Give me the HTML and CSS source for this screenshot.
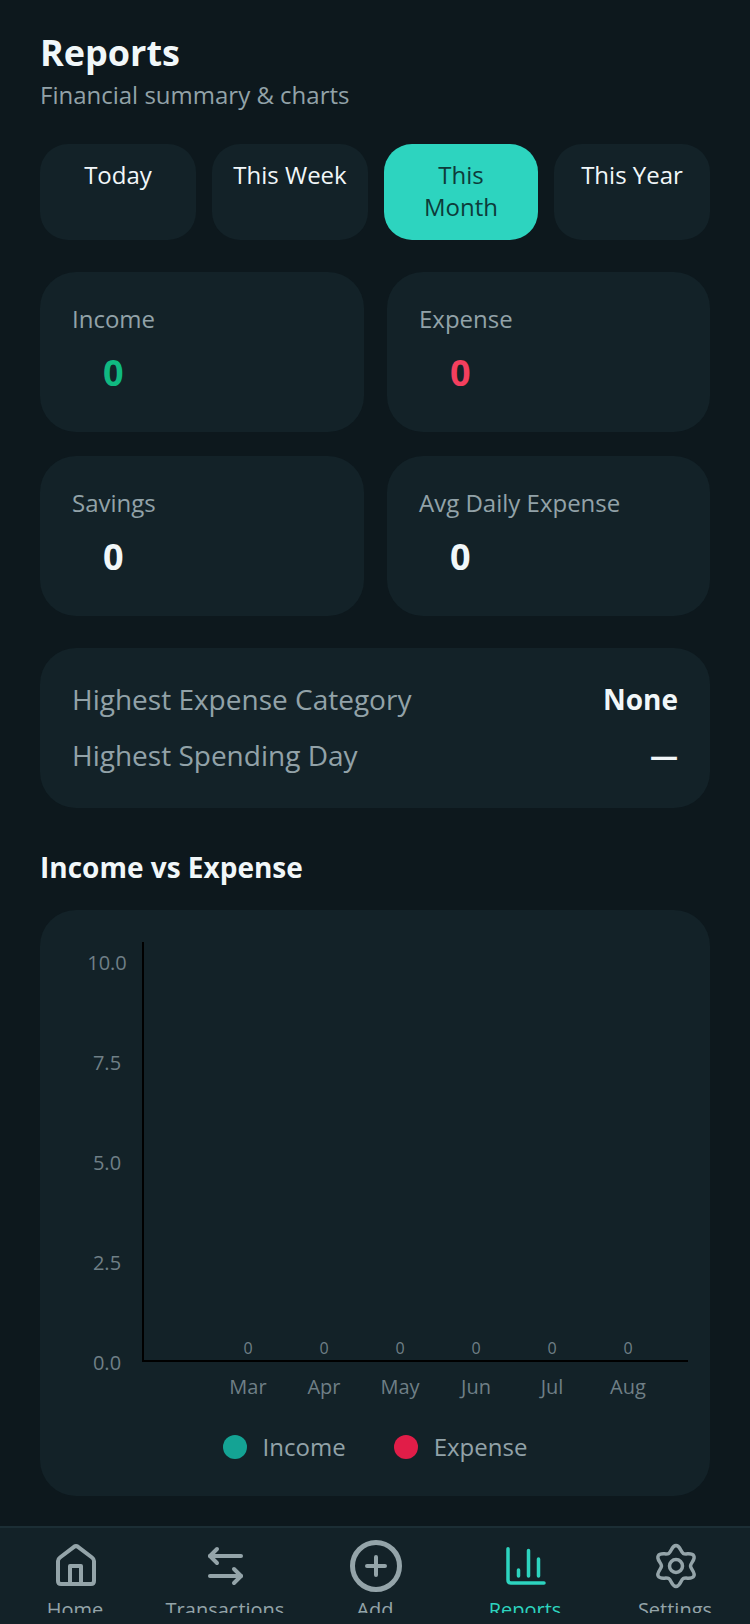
FILE: index.html
```html
<!DOCTYPE html>
<html lang="en">
<head>
    <meta charset="UTF-8">
    <meta name="viewport" content="width=device-width, initial-scale=1.0">
    <title>Reports</title>
    <link rel="stylesheet" href="styles.css">
</head>
<body>
    <div class="screen">
        <main class="content">
            <h1 class="title">Reports</h1>
            <p class="subtitle">Financial summary &amp; charts</p>

            <div class="periods">
                <div class="period">Today</div>
                <div class="period">This Week</div>
                <div class="period active">This Month</div>
                <div class="period">This Year</div>
            </div>

            <div class="stats">
                <div class="stat">
                    <div class="stat-label">Income</div>
                    <div class="stat-value income">0</div>
                </div>
                <div class="stat">
                    <div class="stat-label">Expense</div>
                    <div class="stat-value expense">0</div>
                </div>
                <div class="stat">
                    <div class="stat-label">Savings</div>
                    <div class="stat-value">0</div>
                </div>
                <div class="stat">
                    <div class="stat-label">Avg Daily Expense</div>
                    <div class="stat-value">0</div>
                </div>
            </div>

            <div class="highlights">
                <div class="highlight">
                    <span class="highlight-label">Highest Expense Category</span>
                    <span class="highlight-value">None</span>
                </div>
                <div class="highlight">
                    <span class="highlight-label">Highest Spending Day</span>
                    <span class="highlight-value">—</span>
                </div>
            </div>

            <h2 class="section-title">Income vs Expense</h2>

            <div class="chart-card">
                <!-- chart area: 0,0 is the top left of the card -->
                <svg class="chart" width="670" height="470" viewBox="0 0 670 470">
                    <g class="tick">
                        <text x="67" y="60">10.0</text>
                        <text x="67" y="160">7.5</text>
                        <text x="67" y="260">5.0</text>
                        <text x="67" y="360">2.5</text>
                        <text x="67" y="460">0.0</text>
                    </g>
                    <path class="axis" d="M103 32V451H648"/>
                    <g class="bar-value">
                        <text x="208" y="444">0</text>
                        <text x="284" y="444">0</text>
                        <text x="360" y="444">0</text>
                        <text x="436" y="444">0</text>
                        <text x="512" y="444">0</text>
                        <text x="588" y="444">0</text>
                    </g>
                </svg>
                <div class="months">
                    <span>Mar</span><span>Apr</span><span>May</span><span>Jun</span><span>Jul</span><span>Aug</span>
                </div>
                <div class="legend">
                    <div class="legend-item"><span class="dot dot-income"></span>Income</div>
                    <div class="legend-item"><span class="dot dot-expense"></span>Expense</div>
                </div>
            </div>
        </main>

        <nav class="tabbar">
            <div class="tab">
                <svg class="tab-icon" width="48" height="48" viewBox="0 0 48 48" fill="none" stroke="currentColor" stroke-width="4" stroke-linejoin="round" stroke-linecap="round">
                    <path d="M7 19q0-2 2-3.500L23 4.800q2-1.300 4 0l14 10.700q2 1.500 2 3.500v20q0 3-3 3H10q-3 0-3-3Z"/>
                    <path d="M19 42V24h11v18"/>
                </svg>
                <span class="tab-label">Home</span>
            </div>
            <div class="tab">
                <svg class="tab-icon" width="48" height="48" viewBox="0 0 48 48" fill="none" stroke="currentColor" stroke-width="4" stroke-linejoin="round" stroke-linecap="round">
                    <path d="M40 14H9"/>
                    <path d="M16 7l-7 7 7 7"/>
                    <path d="M9 34h31"/>
                    <path d="M33 27l7 7-7 7"/>
                </svg>
                <span class="tab-label">Transactions</span>
            </div>
            <div class="tab">
                <svg class="tab-icon add-icon" width="48" height="48" viewBox="0 0 48 48" fill="none" stroke="currentColor" stroke-width="4" stroke-linecap="round">
                    <circle cx="25" cy="24" r="23.500" stroke-width="5"/>
                    <path d="M25 15v18M16 24h18"/>
                </svg>
                <span class="tab-label">Add</span>
            </div>
            <div class="tab active">
                <svg class="tab-icon" width="48" height="48" viewBox="0 0 48 48" fill="none" stroke="currentColor" stroke-width="3.500" stroke-linejoin="round" stroke-linecap="round">
                    <path d="M7 6.750V38q0 3 3 3h33"/>
                    <path d="M17.500 34v-6M27.500 34V8.500M37.500 34V17"/>
                </svg>
                <span class="tab-label">Reports</span>
            </div>
            <div class="tab">
                <svg class="tab-icon" width="48" height="48" viewBox="-25 -24 48 48" fill="none" stroke="currentColor" stroke-width="3.500" stroke-linejoin="round" stroke-linecap="round">
                    <circle cx="0" cy="0" r="6.500"/>
                    <path d="M0-20.500C4.200-20.500 4.650-14.060 7.250-12.560 9.850-11.060 15.650-13.890 17.750-10.250 19.850-6.610 14.500-3 14.500 0 14.500 3 19.850 6.610 17.750 10.250 15.650 13.890 9.850 11.060 7.250 12.560 4.650 14.060 4.200 20.500 0 20.500-4.200 20.500-4.650 14.060-7.250 12.560-9.850 11.060-15.650 13.890-17.750 10.250-19.850 6.610-14.500 3-14.500 0-14.500-3-19.850-6.610-17.750-10.250-15.650-13.890-9.850-11.060-7.250-12.560-4.650-14.060-4.200-20.500 0-20.500Z"/>
                </svg>
                <span class="tab-label">Settings</span>
            </div>
        </nav>
    </div>
</body>
</html>
```

FILE: styles.css
```css
* {
    box-sizing: border-box;
}
body {
    margin: 0;
    background-color: #0d181d;
    font-family: "Open Sans", "Noto Sans", sans-serif;
    color: #f1f7f9;
}
.screen {
    width: 750px;
    height: 1624px;
    display: flex;
    flex-direction: column;
    overflow: hidden;
}
.content {
    flex: 1;
    padding: 31px 40px 0;
    min-height: 0;
}
.title {
    margin: 0;
    font-size: 36px;
    line-height: 44px;
    font-weight: 700;
}
.subtitle {
    margin: 4px 0 0;
    font-size: 24px;
    line-height: 32px;
    color: #92a2a8;
}

/* period switch */
.periods {
    display: flex;
    gap: 16px;
    margin-top: 33px;
}
.period {
    flex: 1 1 0;
    padding: 15px 16px 17px;
    border-radius: 28px;
    background-color: #132228;
    font-size: 24px;
    line-height: 32px;
    text-align: center;
}
.period.active {
    flex: 0 0 154px;
    background-color: #2dd4bf;
    color: #0d3b3a;
}

/* stat cards */
.stats {
    display: grid;
    grid-template-columns: 324px 1fr;
    gap: 24px 23px;
    margin-top: 32px;
}
.stat {
    height: 160px;
    padding: 31px 32px;
    border-radius: 36px;
    background-color: #132228;
}
.stat-label {
    font-size: 24px;
    line-height: 32px;
    color: #92a2a8;
}
.stat-value {
    margin-top: 14px;
    padding-left: 31px;
    font-size: 36px;
    line-height: 48px;
    font-weight: 700;
}
.income {
    color: #10b981;
}
.expense {
    color: #f43f5e;
}

/* highlights */
.highlights {
    display: flex;
    flex-direction: column;
    gap: 16px;
    height: 160px;
    margin-top: 32px;
    padding: 31px 32px 0;
    border-radius: 36px;
    background-color: #132228;
}
.highlight {
    display: flex;
    justify-content: space-between;
    align-items: center;
    font-size: 28px;
    line-height: 40px;
}
.highlight-label {
    color: #92a2a8;
}
.highlight-value {
    font-weight: 700;
}

.section-title {
    margin: 39px 0 0;
    font-size: 28px;
    line-height: 40px;
    font-weight: 700;
}

/* chart */
.chart-card {
    height: 586px;
    margin-top: 23px;
    border-radius: 36px;
    background-color: #132228;
}
.chart {
    display: block;
}
.axis {
    fill: none;
    stroke: #000;
    stroke-width: 2;
}
.tick text {
    fill: #6f7f86;
    font-size: 20px;
    text-anchor: middle;
}
.bar-value text {
    fill: #6f7f86;
    font-size: 16px;
    text-anchor: middle;
}
.months {
    display: flex;
    margin-top: -7px;
    padding-left: 170px;
    font-size: 20px;
    line-height: 28px;
    color: #6f7f86;
}
.months span {
    width: 76px;
    text-align: center;
}
.legend {
    display: flex;
    justify-content: center;
    gap: 48px;
    margin-top: 30px;
    font-size: 24px;
    line-height: 32px;
    color: #92a2a8;
}
.legend-item {
    display: flex;
    align-items: center;
    gap: 16px;
}
.dot {
    width: 24px;
    height: 24px;
    border-radius: 50%;
}
.dot-income {
    background-color: #14a394;
}
.dot-expense {
    background-color: #e11d48;
}

/* bottom tabs */
.tabbar {
    flex: none;
    display: flex;
    height: 98px;
    border-top: 2px solid #1c2e35;
    background-color: #132228;
}
.tab {
    position: relative;
    flex: 1;
    height: 85px;
    overflow: hidden;
    display: flex;
    flex-direction: column;
    align-items: center;
    color: #94a4a9;
}
.tab.active {
    color: #2dd4bf;
}
.tab-icon {
    flex: none;
    margin-top: 14px;
}
.add-icon {
    overflow: visible;
}
.tab-label {
    position: absolute;
    top: 68px;
    font-size: 20px;
    line-height: 28px;
}
```
